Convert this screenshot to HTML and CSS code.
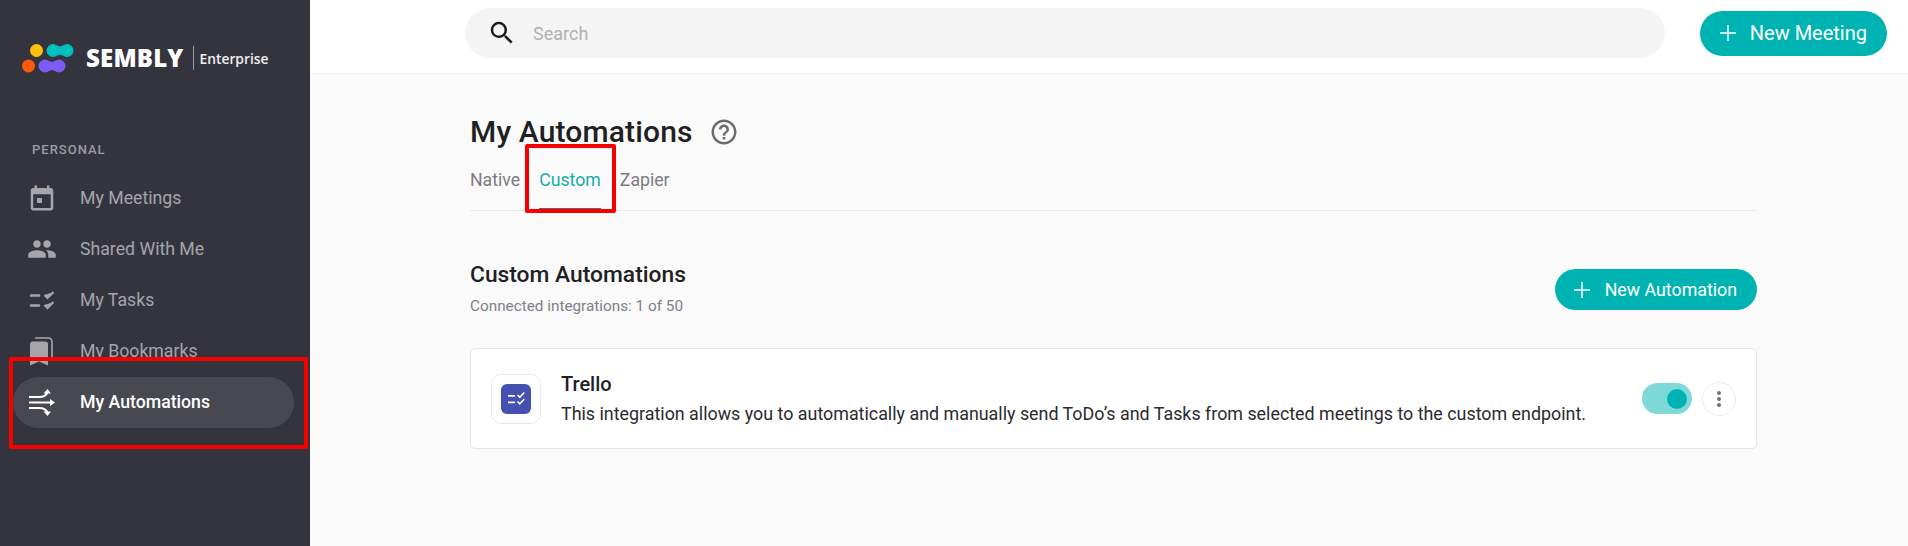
FILE: index.html
```html
<!DOCTYPE html>
<html>
<head>
    <link rel="stylesheet" href="styles.css">
</head>
<body>
    <div class="sidebar">
        <div class="logo">
            <svg class="logo-mark" width="54" height="30" viewBox="0 0 54 30">
                <circle cx="14.5" cy="7.5" r="6.5" fill="#ffc107"/>
                <path d="M31 1c3.2 0 4.500 2.500 7 2.500s3.800-2.500 7-2.500a6.500 6.500 0 0 1 0 13c-3.200 0-4.500-2.500-7-2.500s-3.800 2.500-7 2.500a6.500 6.500 0 0 1 0-13z" fill="#00bfbf"/>
                <circle cx="6.5" cy="23" r="6.500" fill="#ff5a0a"/>
                <path d="M23 16.500c3.200 0 4.500 2.500 7 2.500s3.800-2.500 7-2.500a6.500 6.500 0 0 1 0 13c-3.200 0-4.500-2.500-7-2.500s-3.800 2.500-7 2.500a6.500 6.500 0 0 1 0-13z" fill="#7c5cf5"/>
            </svg>
            <span class="logo-name">SEMBLY</span>
            <span class="logo-plan">Enterprise</span>
        </div>
        <div class="nav-title">PERSONAL</div>
        <div class="nav">
            <div class="nav-item">
                <svg class="nav-icon" viewBox="0 0 24 24"><path d="M19 4h-1V2h-2v2H8V2H6v2H5c-1.100 0-2 .9-2 2v14c0 1.100.9 2 2 2h14c1.100 0 2-.9 2-2V6c0-1.100-.9-2-2-2zm0 16H5V9h14v11zM8 12h4v4H8z"/></svg>
                My Meetings
            </div>
            <div class="nav-item">
                <svg class="nav-icon" viewBox="0 0 24 24"><path d="M16 11c1.660 0 2.990-1.340 2.990-3S17.660 5 16 5c-1.660 0-3 1.340-3 3s1.340 3 3 3zm-8 0c1.660 0 2.990-1.340 2.990-3S9.660 5 8 5C6.340 5 5 6.340 5 8s1.340 3 3 3zm0 2c-2.330 0-7 1.170-7 3.500V19h14v-2.500c0-2.330-4.670-3.500-7-3.500zm8 0c-.29 0-.62.02-.97.05 1.160.84 1.970 1.970 1.970 3.450V19h6v-2.500c0-2.330-4.670-3.500-7-3.500z"/></svg>
                Shared With Me
            </div>
            <div class="nav-item">
                <svg class="nav-icon" viewBox="0 0 30 30" fill="none" stroke="currentColor">
                    <path d="M4 10.500h8M4 20.500h8" stroke-width="2.600" stroke-linecap="round"/>
                    <path d="M17.500 10l3 3 6-6M17.500 20l3 3 6-6" stroke-width="2.200"/>
                </svg>
                My Tasks
            </div>
            <div class="nav-item">
                <svg class="nav-icon" viewBox="0 0 30 30">
                    <path d="M8 2h13c2.500 0 4 1.500 4 4v17" fill="none" stroke="currentColor" stroke-width="1.600"/>
                    <path d="M3 8c0-1.500 1-2.500 2.500-2.500h13c1.500 0 2.500 1 2.500 2.500v21.500l-9-4-9 4z"/>
                </svg>
                My Bookmarks
            </div>
            <div class="nav-item active">
                <svg class="nav-icon" viewBox="0 0 30 30">
                    <path d="M2 10h10c5 0 7.500-1.500 8.500-5M2 15.500h22M2 21h10c5 0 7.500 1.500 8.500 5" fill="none" stroke="currentColor" stroke-width="2.200"/>
                    <path d="M16.500 6.500L20.500 2 24 6.500zM23 12l5 3.500-5 3.500zM16.500 24.500l4 4.500 3.500-4.500z"/>
                </svg>
                My Automations
            </div>
        </div>
    </div>

    <div class="page">
        <div class="topbar">
            <div class="search">
                <svg class="search-icon" viewBox="0 0 24 24"><path d="M15.500 14h-.79l-.28-.27A6.470 6.470 0 0 0 16 9.500 6.500 6.500 0 1 0 9.500 16c1.610 0 3.090-.59 4.230-1.570l.27.28v.79l5 4.990L20.490 19l-4.990-5zm-6 0C7.010 14 5 11.990 5 9.500S7.010 5 9.500 5 14 7.010 14 9.500 11.990 14 9.500 14z"/></svg>
                <span class="search-text">Search</span>
            </div>
            <div class="button button-top">
                <svg class="plus" viewBox="0 0 16 16"><path d="M8 0v16M0 8h16"/></svg>
                New Meeting
            </div>
        </div>

        <div class="content">
            <div class="title-row">
                <h1 class="title">My Automations</h1>
                <svg class="help" viewBox="0 0 24 24"><path d="M11 18h2v-2h-2v2zm1-16C6.480 2 2 6.480 2 12s4.480 10 10 10 10-4.480 10-10S17.520 2 12 2zm0 18c-4.410 0-8-3.590-8-8s3.590-8 8-8 8 3.590 8 8-3.590 8-8 8zm0-14c-2.210 0-4 1.790-4 4h2c0-1.100.9-2 2-2s2 .9 2 2c0 2-3 1.750-3 5h2c0-2.250 3-2.500 3-5 0-2.210-1.790-4-4-4z"/></svg>
            </div>
            <div class="tabs">
                <div class="tab">Native</div>
                <div class="tab tab-active">Custom</div>
                <div class="tab">Zapier</div>
            </div>

            <div class="section-head">
                <div>
                    <h2 class="section-title">Custom Automations</h2>
                    <div class="section-sub">Connected integrations: 1 of 50</div>
                </div>
                <div class="button button-small">
                    <svg class="plus" viewBox="0 0 16 16"><path d="M8 0v16M0 8h16"/></svg>
                    New Automation
                </div>
            </div>

            <div class="card">
                <div class="card-icon">
                    <svg class="card-icon-inner" viewBox="0 0 30 30"><path d="M7 11h7v1.800H7zM7 17.500h7v1.800H7z" fill="#fff"/><path d="M16.500 11l2.300 2.300 4.500-4.800M16.500 17.500l2.300 2.300 4.500-4.800" fill="none" stroke="#fff" stroke-width="1.600"/></svg>
                </div>
                <div class="card-text">
                    <div class="card-name">Trello</div>
                    <div class="card-desc">This integration allows you to automatically and manually send ToDo’s and Tasks from selected meetings to the custom endpoint.</div>
                </div>
                <div class="toggle"><span class="knob"></span></div>
                <div class="more">
                    <span class="dot"></span><span class="dot"></span><span class="dot"></span>
                </div>
            </div>
        </div>
    </div>

    <!-- red annotation boxes -->
    <div class="mark mark-tab"></div>
    <div class="mark mark-nav"></div>
</body>
</html>
```

FILE: styles.css
```css
body {
    font-family: Roboto, Arial, sans-serif;
    display: flex;
    height: 100vh;
    margin: 0;
    overflow: hidden;
    background: #fafafa;
    color: #1f1f24;
}

/* Sidebar */
.sidebar {
    width: 310px;
    flex-shrink: 0;
    background: #34343f;
    color: #a5a5aa;
}

.logo {
    display: flex;
    align-items: center;
    padding: 43px 0 0 22px;
    height: 30px;
}

.logo-name {
    margin-left: 10px;
    padding-right: 9px;
    border-right: 1px solid #9a9aa0;
    font-family: "Open Sans", sans-serif;
    font-size: 24px;
    font-weight: 800;
    line-height: 24px;
    height: 24px;
    color: #fff;
    letter-spacing: 0.2px;
}

.logo-plan {
    margin-left: 6px;
    font-family: "Open Sans", sans-serif;
    font-size: 13.8px;
    font-weight: 600;
    color: #f0f0f0;
}

.nav-title {
    margin: 69px 0 0 32px;
    font-size: 13px;
    font-weight: 500;
    line-height: 15px;
    letter-spacing: 1px;
    color: #9c9ca2;
}

.nav {
    margin: 16px 0 0 13px;
    width: 281px;
}

.nav-item {
    display: flex;
    align-items: center;
    gap: 23px;
    box-sizing: border-box;
    height: 51px;
    padding: 0 0 2px 14px;
    border-radius: 26px;
    font-size: 17.7px;
}

.nav-item.active {
    background: #484851;
    color: #fff;
    font-weight: 500;
}

.nav-icon {
    width: 30px;
    height: 30px;
    fill: currentColor;
}

/* Top bar */
.page {
    flex: 1;
    min-width: 0;
}

.topbar {
    display: flex;
    align-items: center;
    box-sizing: border-box;
    height: 74px;
    padding: 0 21px 7px 155px;
    background: #fff;
    border-bottom: 1px solid #f0f0f0;
}

.search {
    display: flex;
    align-items: center;
    flex: 1;
    height: 50px;
    padding-left: 22px;
    border-radius: 25px;
    background: #f4f4f4;
}

.search-icon {
    width: 30px;
    height: 30px;
    fill: #1b1b1f;
}

.search-text {
    margin-left: 16px;
    font-size: 18px;
    color: #b0b0b0;
}

.button {
    display: flex;
    align-items: center;
    background: #00b3b3;
    color: white;
    border-radius: 25px;
}

.button-top {
    height: 45px;
    margin-left: 35px;
    padding: 0 20px;
    gap: 14px;
    font-size: 20px;
}

.button-small {
    height: 41px;
    margin-top: 8px;
    padding: 0 20px 0 19px;
    gap: 15px;
    font-size: 17.8px;
}

.plus {
    width: 16px;
    height: 16px;
    fill: none;
    stroke: white;
    stroke-width: 1.5;
}

/* Content */
.content {
    width: 1287px;
    margin-left: 160px;
}

.title-row {
    display: flex;
    align-items: center;
    gap: 16px;
    padding-top: 39px;
}

.title {
    margin: 0;
    font-size: 30px;
    font-weight: 500;
    line-height: 38px;
    letter-spacing: 0.15px;
}

.help {
    width: 30px;
    height: 30px;
    fill: #6b6b6b;
}

.tabs {
    display: flex;
    gap: 19px;
    height: 58px;
    border-bottom: 1px solid #ebebeb;
    margin-top: 1px;
}

.tab {
    display: flex;
    align-items: center;
    box-sizing: border-box;
    padding-bottom: 3px;
    font-size: 17.7px;
    color: #7c7c84;
}

.tab-active {
    color: #14adad;
    border-bottom: 2px solid #666;
    padding-bottom: 1px;
}

.section-head {
    display: flex;
    justify-content: space-between;
    align-items: flex-start;
    margin-top: 50px;
}

.section-title {
    margin: 0;
    font-size: 22.8px;
    font-weight: 500;
    line-height: 28px;
}

.section-sub {
    margin-top: 8px;
    font-size: 15.3px;
    line-height: 18px;
    color: #80808a;
}

.card {
    display: flex;
    align-items: center;
    box-sizing: border-box;
    height: 101px;
    margin-top: 33px;
    padding: 0 20px;
    background: #fff;
    border: 1px solid #e4e4e4;
    border-radius: 5px;
}

.card-icon {
    display: flex;
    align-items: center;
    justify-content: center;
    width: 50px;
    height: 50px;
    box-sizing: border-box;
    border: 1px solid #e8e8e8;
    border-radius: 10px;
}

.card-icon-inner {
    width: 30px;
    height: 30px;
    background: #4350b0;
    border-radius: 6px;
}

.card-text {
    flex: 1;
    margin-left: 20px;
}

.card-name {
    font-size: 20px;
    font-weight: 500;
    line-height: 24px;
}

.card-desc {
    margin-top: 6px;
    font-size: 17.87px;
    line-height: 24px;
    color: #2a2a30;
}

.toggle {
    display: flex;
    align-items: center;
    justify-content: flex-end;
    width: 50px;
    height: 31px;
    padding-right: 5px;
    box-sizing: border-box;
    border-radius: 16px;
    background: #80d9d9;
}

.knob {
    width: 20px;
    height: 20px;
    border-radius: 50%;
    background: #00b3b3;
}

.more {
    display: flex;
    flex-direction: column;
    align-items: center;
    justify-content: center;
    gap: 2px;
    width: 34px;
    height: 34px;
    box-sizing: border-box;
    margin-left: 10px;
    border: 1px solid #ececec;
    border-radius: 50%;
}

.dot {
    width: 4px;
    height: 4px;
    border-radius: 50%;
    background: #707070;
}

/* Annotations */
.mark {
    position: absolute;
    box-sizing: border-box;
    border: 4px solid #f80000;
    border-radius: 2px;
}

.mark-tab {
    left: 525px;
    top: 144px;
    width: 91px;
    height: 69px;
}

.mark-nav {
    left: 9px;
    top: 357px;
    width: 299px;
    height: 92px;
}
```
